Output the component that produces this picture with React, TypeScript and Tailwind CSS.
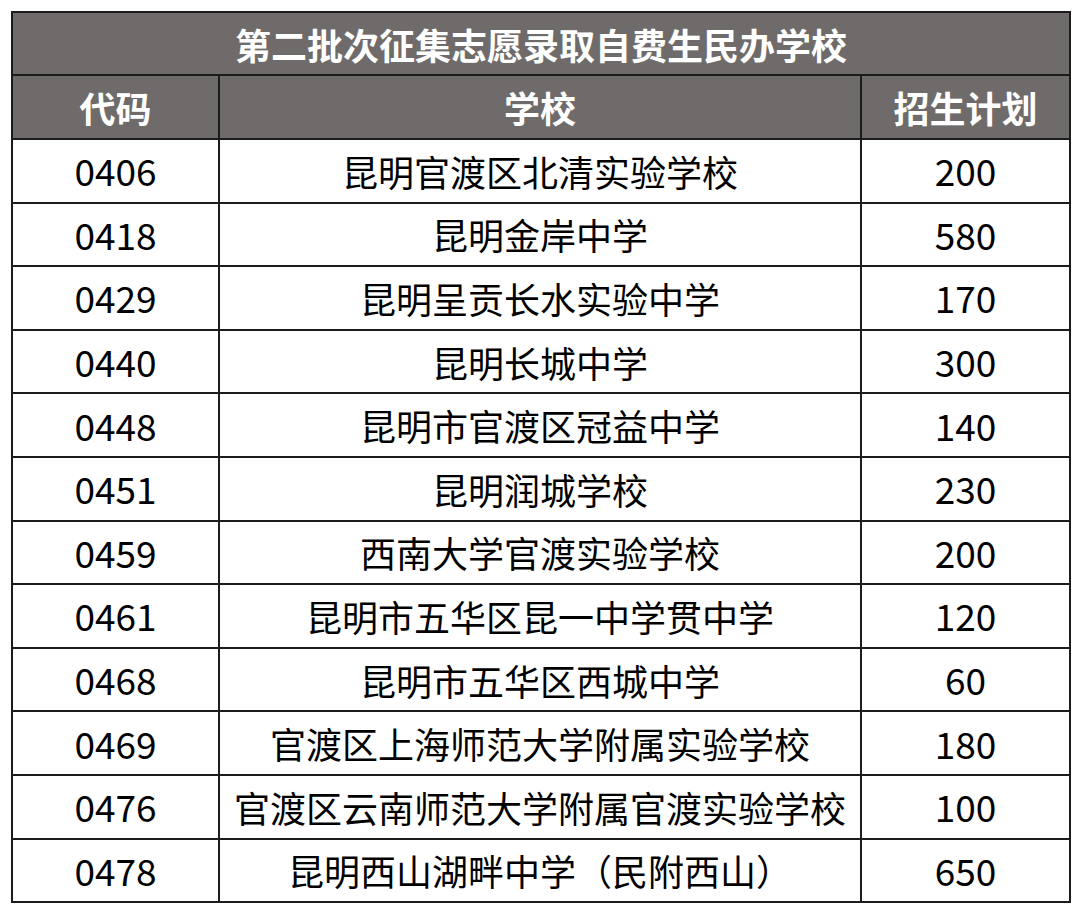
const rows: [string, string, string][] = [
  ['0406', '昆明官渡区北清实验学校', '200'],
  ['0418', '昆明金岸中学', '580'],
  ['0429', '昆明呈贡长水实验中学', '170'],
  ['0440', '昆明长城中学', '300'],
  ['0448', '昆明市官渡区冠益中学', '140'],
  ['0451', '昆明润城学校', '230'],
  ['0459', '西南大学官渡实验学校', '200'],
  ['0461', '昆明市五华区昆一中学贯中学', '120'],
  ['0468', '昆明市五华区西城中学', '60'],
  ['0469', '官渡区上海师范大学附属实验学校', '180'],
  ['0476', '官渡区云南师范大学附属官渡实验学校', '100'],
  ['0478', '昆明西山湖畔中学（民附西山）', '650'],
];

export default function App() {
  return (
    <div
      className="w-[1080px] h-[914px] bg-white pt-[11px] pl-[11px]"
      style={{ fontFamily: '"Noto Sans CJK SC", "Noto Sans", sans-serif' }}
    >
      <table className="border-collapse w-[1058px] table-fixed text-[36px] leading-none text-black">
        <colgroup>
          <col className="w-[207px]" />
          <col className="w-[642px]" />
          <col className="w-[209px]" />
        </colgroup>
        <thead>
          <tr className="h-[63px] bg-[#6f6b6a]">
            <th colSpan={3} className="border-2 border-[#1c1c1c] text-white font-bold text-center">
              第二批次征集志愿录取自费生民办学校
            </th>
          </tr>
          <tr className="h-[64px] bg-[#6f6b6a]">
            <th className="border-2 border-[#1c1c1c] text-white font-bold">代码</th>
            <th className="border-2 border-[#1c1c1c] text-white font-bold">学校</th>
            <th className="border-2 border-[#1c1c1c] text-white font-bold">招生计划</th>
          </tr>
        </thead>
        <tbody>
          {rows.map(([code, school, plan]) => (
            <tr key={code} className="h-[63.6px]">
              <td className="border-2 border-[#1c1c1c] text-center text-[37px]">{code}</td>
              <td className="border-2 border-[#1c1c1c] text-center">{school}</td>
              <td className="border-2 border-[#1c1c1c] text-center text-[37px]">{plan}</td>
            </tr>
          ))}
        </tbody>
      </table>
    </div>
  );
}
